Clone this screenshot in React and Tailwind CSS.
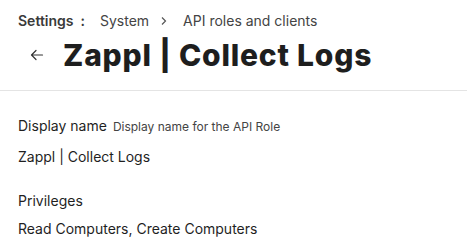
export default function App() {
    return (
        <div className="w-[467px] h-[251px] bg-white overflow-hidden text-[#1f1f1f]" style={{ fontFamily: 'Inter, "Noto Sans", sans-serif' }}>
            {/* Header */}
            <div className="pl-[18px] pt-[11px] h-[91px] border-b border-[#e4e4e4]">
                <div className="flex items-center text-[14px] leading-[20px] text-[#444]">
                    <span className="font-semibold text-[#3a3a3a]">Settings</span>
                    <span className="ml-[7px] font-semibold text-[#3a3a3a]">:</span>
                    <span className="ml-[15px]">System</span>
                    <svg className="ml-[10px] w-[10px] h-[10px]" viewBox="0 0 10 10" fill="none" stroke="#555" strokeWidth="1.2">
                        <path d="M3 1.5 L6.5 5 L3 8.5" />
                    </svg>
                    <span className="ml-[14px]">API roles and clients</span>
                </div>
                <div className="flex items-center mt-[2px]">
                    <svg className="ml-[12px] w-[14px] h-[14px]" viewBox="0 0 14 14" fill="none" stroke="#333" strokeWidth="1.2" strokeLinecap="round">
                        <path d="M1.5 7 H12.5 M1.5 7 L6 2.5 M1.5 7 L6 11.5" />
                    </svg>
                    <h1 className="ml-[19px] text-[30px] leading-[44px] font-extrabold tracking-[0.8px] text-[#1e1e1e]">Zappl | Collect Logs</h1>
                </div>
            </div>
            {/* Body */}
            <div className="pl-[18px] pt-[25px] text-[14px] leading-[20px]">
                <div className="flex items-baseline">
                    <span>Display name</span>
                    <span className="ml-[6px] text-[12px] text-[#444]">Display name for the API Role</span>
                </div>
                <div className="mt-[10px]">Zappl | Collect Logs</div>
                <div className="mt-[24px]">Privileges</div>
                <div className="mt-[8px]">Read Computers, Create Computers</div>
            </div>
        </div>
    );
}
